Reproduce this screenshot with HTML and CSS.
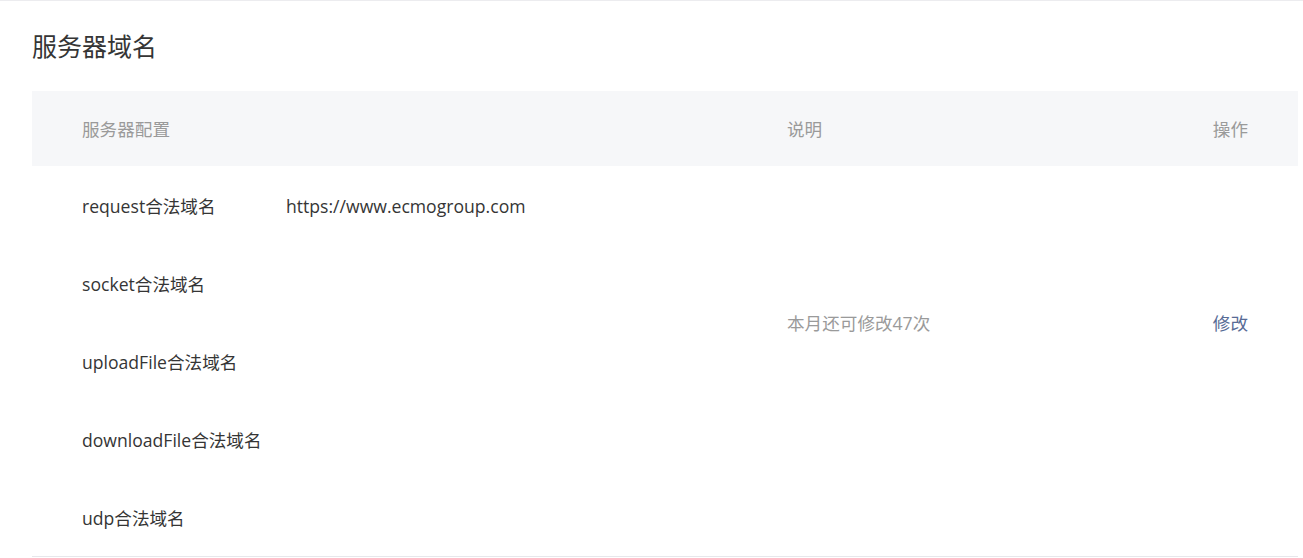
FILE: index.html
```html
<!DOCTYPE html>
<html lang="zh-CN">
<head>
    <meta charset="UTF-8">
    <meta name="viewport" content="width=device-width, initial-scale=1.0">
    <title>服务器域名</title>
    <link rel="stylesheet" href="styles.css">
</head>
<body>
    <div class="panel">
        <h2 class="panel-title">服务器域名</h2>
        <table class="domain-table">
            <thead>
                <tr>
                    <th class="col-config">服务器配置</th>
                    <th class="col-desc">说明</th>
                    <th class="col-op">操作</th>
                </tr>
            </thead>
            <tbody>
                <tr>
                    <td class="col-config"><span class="item-label">request合法域名</span><span class="item-value">https://www.ecmogroup.com</span></td>
                    <td class="col-desc" rowspan="4">本月还可修改47次</td>
                    <td class="col-op" rowspan="4"><a href="#" class="op-link">修改</a></td>
                </tr>
                <tr>
                    <td class="col-config"><span class="item-label">socket合法域名</span></td>
                </tr>
                <tr>
                    <td class="col-config"><span class="item-label">uploadFile合法域名</span></td>
                </tr>
                <tr>
                    <td class="col-config"><span class="item-label">downloadFile合法域名</span></td>
                </tr>
                <tr class="last-row">
                    <td class="col-config"><span class="item-label">udp合法域名</span></td>
                    <td class="col-desc"></td>
                    <td class="col-op"></td>
                </tr>
            </tbody>
        </table>
    </div>
</body>
</html>
```

FILE: styles.css
```css
/* BODY */
body {
    margin: 0;
    font-family: "Open Sans", "Noto Sans CJK SC", sans-serif;
    color: #353535;
    background-color: #fff;
}

/* Panel */
.panel {
    border-top: 1px solid #ececef;
    padding: 0 5px 0 32px;
}
.panel-title {
    margin: 27px 0 27px;
    font-size: 25px;
    font-weight: normal;
    line-height: 36px;
    color: #353535;
}

/* Table */
.domain-table {
    width: 100%;
    border-collapse: collapse;
    font-size: 17.6px;
}
.domain-table th {
    height: 75px;
    padding: 0;
    background-color: #f6f7f9;
    color: #9a9a9a;
    font-weight: normal;
    text-align: left;
}
.domain-table td {
    height: 78px;
    padding: 0;
}
.domain-table .col-config {
    width: 705px;
    padding-left: 50px;
}
.domain-table .col-desc {
    color: #9a9a9a;
}
.domain-table .col-op {
    width: 150px;
    padding-right: 50px;
    text-align: right;
}
.last-row td {
    border-bottom: 1px solid #e7e7eb;
}

.item-label {
    display: inline-block;
    width: 204px;
}
.op-link {
    color: #576b95;
    text-decoration: none;
}
```
